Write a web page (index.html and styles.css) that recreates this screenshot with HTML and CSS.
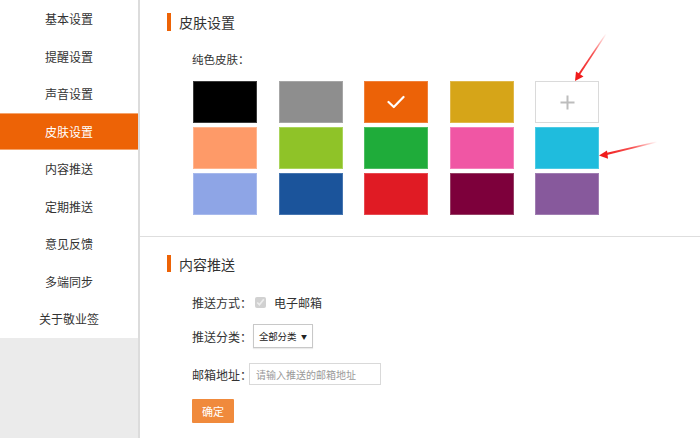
FILE: index.html
```html
<!DOCTYPE html>
<html lang="zh-CN">
<head>
<meta charset="utf-8">
<title>皮肤设置</title>
<link rel="stylesheet" href="styles.css">
</head>
<body>
<div class="app">
  <aside class="sidebar">
    <ul class="menu">
      <li class="menu-item">基本设置</li>
      <li class="menu-item">提醒设置</li>
      <li class="menu-item">声音设置</li>
      <li class="menu-item active">皮肤设置</li>
      <li class="menu-item">内容推送</li>
      <li class="menu-item">定期推送</li>
      <li class="menu-item">意见反馈</li>
      <li class="menu-item">多端同步</li>
      <li class="menu-item">关于敬业签</li>
    </ul>
  </aside>
  <main class="main">
    <section class="section skin">
      <h2 class="section-title">皮肤设置</h2>
      <div class="skin-label">纯色皮肤：</div>
      <div class="swatches">
        <div class="swatch c-black"></div>
        <div class="swatch c-gray"></div>
        <div class="swatch c-orange selected">
          <svg class="check" width="18" height="14" viewBox="0 0 18 14"><path d="M1.5 7 L6.8 12 L16.5 2" fill="none" stroke="#fff" stroke-width="2.2" stroke-linecap="round" stroke-linejoin="round"/></svg>
        </div>
        <div class="swatch c-gold"></div>
        <div class="swatch add">
          <svg width="15" height="15" viewBox="0 0 15 15"><path d="M7.5 0.5 V14.5 M0.5 7.5 H14.5" stroke="#bdbdbd" stroke-width="2"/></svg>
        </div>
        <div class="swatch c-salmon"></div>
        <div class="swatch c-lime"></div>
        <div class="swatch c-green"></div>
        <div class="swatch c-pink"></div>
        <div class="swatch c-cyan"></div>
        <div class="swatch c-periwinkle"></div>
        <div class="swatch c-navy"></div>
        <div class="swatch c-red"></div>
        <div class="swatch c-wine"></div>
        <div class="swatch c-purple"></div>
      </div>
    </section>
    <section class="section push">
      <h2 class="section-title">内容推送</h2>
      <div class="form-row row-method">
        <span class="label">推送方式：</span>
        <input class="checkbox" type="checkbox" checked disabled>
        <span class="check-text">电子邮箱</span>
      </div>
      <div class="form-row row-cat">
        <span class="label">推送分类：</span>
        <div class="select"><span class="select-text">全部分类</span><span class="caret">▼</span></div>
      </div>
      <div class="form-row row-mail">
        <span class="label">邮箱地址：</span>
        <input class="text-input" type="text" placeholder="请输入推送的邮箱地址">
      </div>
      <button class="btn" type="button">确定</button>
    </section>
  </main>
</div>
<svg class="annotations" width="700" height="438" viewBox="0 0 700 438">
  <defs>
    <linearGradient id="g1" gradientUnits="userSpaceOnUse" x1="605" y1="33" x2="577" y2="77">
      <stop offset="0" stop-color="#ff3030" stop-opacity="0"/>
      <stop offset="0.45" stop-color="#f52a2a" stop-opacity="0.8"/>
      <stop offset="1" stop-color="#f01c1c"/>
    </linearGradient>
    <linearGradient id="g2" gradientUnits="userSpaceOnUse" x1="657" y1="142" x2="604" y2="154">
      <stop offset="0" stop-color="#ff3030" stop-opacity="0"/>
      <stop offset="0.45" stop-color="#f52a2a" stop-opacity="0.8"/>
      <stop offset="1" stop-color="#f01c1c"/>
    </linearGradient>
  </defs>
  <path d="M605.5 33.5 L606.5 34.3 L579.5 75.5 L577.8 74.4 Z" fill="url(#g1)"/>
  <path d="M575 81 L576 71.5 L583.5 76.5 Z" fill="#f01c1c"/>
  <path d="M657 141.3 L657.2 142.6 L605 155.6 L604.6 153.2 Z" fill="url(#g2)"/>
  <path d="M599 155.5 L607 150.5 L608 158.8 Z" fill="#f01c1c"/>
</svg>
</body>
</html>
```

FILE: styles.css
```css
* {
  box-sizing: border-box;
}

html, body {
  margin: 0;
  padding: 0;
  background: #fff;
}

body {
  font-family: "Noto Sans CJK SC", "Noto Sans", sans-serif;
  color: #333;
  width: 700px;
  height: 438px;
  overflow: hidden;
  position: relative;
}

.app {
  display: flex;
  height: 438px;
}

.sidebar {
  width: 140px;
  flex: none;
  background: #ebebeb;
  border-right: 2px solid #dcdcdc;
}

.menu {
  list-style: none;
  margin: 0;
  padding: 0;
  background: #fff;
}

.menu-item {
  height: 37.5px;
  display: flex;
  align-items: center;
  justify-content: center;
  font-size: 12px;
  color: #333;
}

.menu-item.active {
  background: #ed6306;
  color: #fff;
  box-shadow: inset 0 1px 0 #f5a46c, inset 0 -1px 0 #f5a46c;
}

.main {
  flex: 1;
  display: flex;
  flex-direction: column;
}

.section {
  padding-left: 27px;
}

.section-title {
  margin: 0;
  height: 18px;
  display: flex;
  align-items: center;
  font-size: 14px;
  font-weight: normal;
  color: #333;
  border-left: 4px solid #ed6306;
  padding-left: 8px;
}

.skin {
  padding-top: 13px;
  padding-bottom: 21px;
  border-bottom: 1px solid #dedede;
}

.skin-label {
  margin: 19px 0 0 25px;
  height: 18px;
  line-height: 18px;
  font-size: 11.5px;
  color: #333;
}

.swatches {
  margin: 13px 0 0 26px;
  display: grid;
  grid-template-columns: repeat(5, 64px);
  grid-auto-rows: 42px;
  column-gap: 21.6px;
  row-gap: 4px;
}

.swatch {
  display: flex;
  align-items: center;
  justify-content: center;
  border: 1px solid rgba(255, 255, 255, 0.28);
}

.c-black { background: #000; border-color: #3a3a3a; }
.c-gray { background: #8e8e8e; border-color: #a6a6a6; }
.c-orange { background: #ec6207; border-color: #f0803a; }
.c-gold { background: #d6a518; border-color: #e0b84a; }
.add { background: #fff; border-color: #dadada; }
.c-salmon { background: #fe9a68; border-color: #ffb58f; }
.c-lime { background: #8fc328; border-color: #aad45b; }
.c-green { background: #1fac3a; border-color: #4dbd62; }
.c-pink { background: #f056a4; border-color: #f480bb; }
.c-cyan { background: #1fbcdd; border-color: #4ccbe5; }
.c-periwinkle { background: #8ea5e6; border-color: #a7b9ec; }
.c-navy { background: #1b549b; border-color: #4675b0; }
.c-red { background: #e01b24; border-color: #e74a51; }
.c-wine { background: #7d003b; border-color: #974065; }
.c-purple { background: #87599c; border-color: #a07db1; }

.push {
  padding-top: 18px;
}

.push .section-title {
  height: 17px;
}

.form-row {
  display: flex;
  align-items: center;
  padding-left: 25px;
  font-size: 12px;
  color: #333;
}

.row-method {
  margin-top: 20px;
  height: 20px;
}

.row-cat {
  margin-top: 12px;
  height: 24px;
}

.row-mail {
  margin-top: 14px;
  height: 24px;
}

.label {
  white-space: nowrap;
}

.checkbox {
  width: 11px;
  height: 11px;
  margin: 0 8px 0 3px;
}

.check-text {
  font-size: 12px;
}

.select {
  margin-left: 1px;
  width: 60px;
  height: 24px;
  border: 1px solid #c8c8c8;
  box-shadow: 0 1px 1px rgba(0, 0, 0, 0.08);
  display: flex;
  align-items: center;
  justify-content: space-between;
  padding: 0 5px 0 5px;
  font-size: 9.5px;
  color: #222;
  background: #fff;
  white-space: nowrap;
}

.select-text {
  letter-spacing: -0.2px;
}

.caret {
  font-size: 6px;
  color: #222;
}

.text-input {
  margin-left: -3px;
  width: 132px;
  height: 22px;
  border: 1px solid #d9d9d9;
  padding: 0 6px;
  font-family: inherit;
  font-size: 10px;
  color: #333;
  outline: none;
}

.text-input::placeholder {
  color: #9a9a9a;
}

.btn {
  margin: 13px 0 0 25px;
  width: 42px;
  height: 24px;
  align-self: flex-start;
  border: none;
  border-radius: 1px;
  background: #f08a3c;
  color: #fff;
  font-family: inherit;
  font-size: 11px;
  padding: 0;
}

.annotations {
  position: absolute;
  left: 0;
  top: 0;
  pointer-events: none;
}
```
